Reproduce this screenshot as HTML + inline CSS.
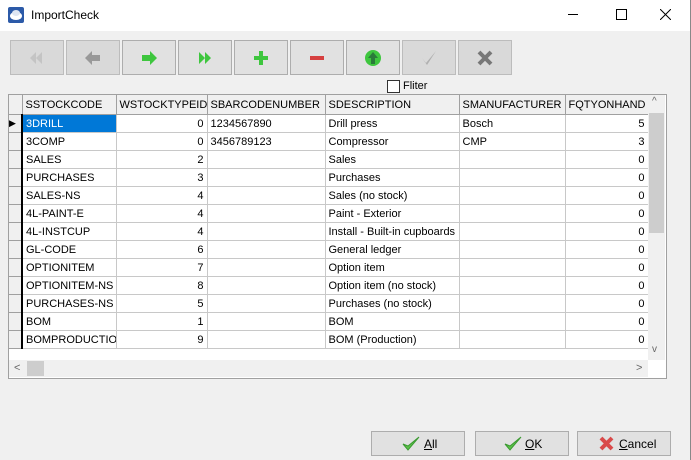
<!DOCTYPE html><html><head><style>
body{margin:0;width:691px;height:460px;background:#f0f0f0;font-family:"Liberation Sans",sans-serif;font-size:11px;position:relative;overflow:hidden;color:#000}
.abs{position:absolute}
.title{left:0;top:0;width:691px;height:31px;background:#fff}
.tb{top:40px;width:52px;height:33px;border:1px solid #bcbcbc;background:#d9d9d9}
.tb.en{background:#e1e1e1;border-color:#adadad}
.tb svg{position:absolute;left:16px;top:8px}
table{border-collapse:collapse;table-layout:fixed}
td{height:17px;border-right:1px solid #c8c8c8;border-bottom:1px solid #c8c8c8;padding:0 3px;white-space:nowrap;overflow:hidden;background:#fff}
th{height:19px;font-weight:normal;text-align:left;padding:0 3px;background:#f0f0f0;border-right:1px solid #a0a0a0;border-bottom:1px solid #a0a0a0;white-space:nowrap;overflow:hidden}
td.i{background:#f0f0f0;border-right:2px solid #000;border-bottom:1px solid #a0a0a0;padding:0}
td.r{text-align:right}
.btn{top:431px;width:92px;height:23px;border:1px solid #adadad;background:#e1e1e1;font-size:12px}
</style></head><body>
<div class="abs title"></div>
<svg class="abs" style="left:8px;top:7px" width="16" height="16"><rect x="0" y="0" width="16" height="16" rx="2" fill="#2c5aa8"/><ellipse cx="8" cy="9" rx="6" ry="4" fill="#fff"/><ellipse cx="8" cy="6" rx="4" ry="3" fill="#dfe6f2"/></svg>
<div class="abs" style="left:31px;top:8px;font-size:12px">ImportCheck</div>
<div class="abs" style="left:568px;top:14px;width:10px;height:1px;background:#000"></div>
<div class="abs" style="left:616px;top:9px;width:9px;height:9px;border:1px solid #000"></div>
<svg class="abs" style="left:660px;top:9px" width="11" height="11"><path d="M0 0 L11 11 M11 0 L0 11" stroke="#000" stroke-width="1"/></svg>
<div class="abs" style="left:690px;top:0;width:1px;height:460px;background:#888"></div>

<div class="abs tb" style="left:10px"><svg width="20" height="18"><path d="M9 3 L3 9 L9 15Z M15 3 L9 9 L15 15Z" fill="#c4c4c4"/></svg></div>
<div class="abs tb" style="left:66px"><svg width="20" height="18"><path d="M9 2 L2 9 L9 16 V12 H17 V6 H9Z" fill="#999"/></svg></div>
<div class="abs tb en" style="left:122px"><svg width="20" height="18"><path d="M11 2 L18 9 L11 16 V12 H3 V6 H11Z" fill="#3ec63e"/></svg></div>
<div class="abs tb en" style="left:178px"><svg width="20" height="18"><path d="M4 3 L10 9 L4 15Z M10 3 L16 9 L10 15Z" fill="#3ec63e"/></svg></div>
<div class="abs tb en" style="left:234px"><svg width="20" height="18"><path d="M8 2 H12 V7 H17 V11 H12 V16 H8 V11 H3 V7 H8Z" fill="#3ec63e"/></svg></div>
<div class="abs tb en" style="left:290px"><svg width="20" height="18"><rect x="3" y="7" width="14" height="4" fill="#d64040"/></svg></div>
<div class="abs tb en" style="left:346px"><svg width="20" height="18"><circle cx="10" cy="9" r="8" fill="#3ec63e"/><path d="M10 3 L15 9 H12 V15 H8 V9 H5Z" fill="#2a7a3a"/></svg></div>
<div class="abs tb" style="left:402px"><svg width="20" height="18"><path d="M3 9 L7 14 L17 2 L8 16Z" fill="#b0b0b0"/></svg></div>
<div class="abs tb" style="left:458px"><svg width="20" height="18"><path d="M4 3 L16 15 M16 3 L4 15" stroke="#777" stroke-width="4"/></svg></div>

<div class="abs" style="left:387px;top:80px;width:11px;height:11px;border:1px solid #333;background:#fff"></div>
<div class="abs" style="left:403px;top:80px">Fliter</div>

<div class="abs" style="left:8px;top:94px;width:657px;height:283px;border:1px solid #a0a0a0;background:#fff"></div>
<div class="abs" style="left:9px;top:95px;width:639px;height:265px;overflow:hidden">
<table style="width:639px">
<colgroup><col style="width:13px"><col style="width:94px"><col style="width:91px"><col style="width:118px"><col style="width:134px"><col style="width:106px"><col style="width:83px"></colgroup>
<tr><th></th><th>SSTOCKCODE</th><th>WSTOCKTYPEID</th><th>SBARCODENUMBER</th><th>SDESCRIPTION</th><th>SMANUFACTURER</th><th>FQTYONHAND</th></tr>
<tr><td class="i" style="font-size:9px">&#9654;</td><td style="background:#0078d7;color:#fff">3DRILL</td><td class="r">0</td><td>1234567890</td><td>Drill press</td><td>Bosch</td><td class="r">5</td></tr>
<tr><td class="i"></td><td>3COMP</td><td class="r">0</td><td>3456789123</td><td>Compressor</td><td>CMP</td><td class="r">3</td></tr>
<tr><td class="i"></td><td>SALES</td><td class="r">2</td><td></td><td>Sales</td><td></td><td class="r">0</td></tr>
<tr><td class="i"></td><td>PURCHASES</td><td class="r">3</td><td></td><td>Purchases</td><td></td><td class="r">0</td></tr>
<tr><td class="i"></td><td>SALES-NS</td><td class="r">4</td><td></td><td>Sales (no stock)</td><td></td><td class="r">0</td></tr>
<tr><td class="i"></td><td>4L-PAINT-E</td><td class="r">4</td><td></td><td>Paint - Exterior</td><td></td><td class="r">0</td></tr>
<tr><td class="i"></td><td>4L-INSTCUP</td><td class="r">4</td><td></td><td>Install - Built-in cupboards</td><td></td><td class="r">0</td></tr>
<tr><td class="i"></td><td>GL-CODE</td><td class="r">6</td><td></td><td>General ledger</td><td></td><td class="r">0</td></tr>
<tr><td class="i"></td><td>OPTIONITEM</td><td class="r">7</td><td></td><td>Option item</td><td></td><td class="r">0</td></tr>
<tr><td class="i"></td><td>OPTIONITEM-NS</td><td class="r">8</td><td></td><td>Option item (no stock)</td><td></td><td class="r">0</td></tr>
<tr><td class="i"></td><td>PURCHASES-NS</td><td class="r">5</td><td></td><td>Purchases (no stock)</td><td></td><td class="r">0</td></tr>
<tr><td class="i"></td><td>BOM</td><td class="r">1</td><td></td><td>BOM</td><td></td><td class="r">0</td></tr>
<tr><td class="i"></td><td>BOMPRODUCTION</td><td class="r">9</td><td></td><td>BOM (Production)</td><td></td><td class="r">0</td></tr>
</table></div>
<div class="abs" style="left:648px;top:95px;width:17px;height:265px;background:#f0f0f0"></div>
<div class="abs" style="left:649px;top:113px;width:15px;height:120px;background:#cdcdcd"></div>
<div class="abs" style="left:652px;top:96px;color:#666;font-size:10px">^</div>
<div class="abs" style="left:652px;top:344px;color:#666;font-size:10px">v</div>
<div class="abs" style="left:9px;top:360px;width:639px;height:17px;background:#f0f0f0"></div>
<div class="abs" style="left:27px;top:361px;width:17px;height:15px;background:#cdcdcd"></div>
<div class="abs" style="left:14px;top:362px;color:#666;font-size:11px">&lt;</div>
<div class="abs" style="left:636px;top:362px;color:#666;font-size:11px">&gt;</div>

<div class="abs btn" style="left:371px"><svg class="abs" style="left:30px;top:3px" width="18" height="17"><path d="M1 9 L6 15 L17 2 L6 11Z" fill="#5cc24a" stroke="#3a9a30"/></svg><span class="abs" style="left:52px;top:5px"><u>A</u>ll</span></div>
<div class="abs btn" style="left:475px"><svg class="abs" style="left:28px;top:3px" width="18" height="17"><path d="M1 9 L6 15 L17 2 L6 11Z" fill="#5cc24a" stroke="#3a9a30"/></svg><span class="abs" style="left:49px;top:5px"><u>O</u>K</span></div>
<div class="abs btn" style="left:577px"><svg class="abs" style="left:20px;top:3px" width="17" height="17"><path d="M3 3 L14 14 M14 3 L3 14" stroke="#d94a4a" stroke-width="4"/></svg><span class="abs" style="left:41px;top:5px"><u>C</u>ancel</span></div>
</body></html>
